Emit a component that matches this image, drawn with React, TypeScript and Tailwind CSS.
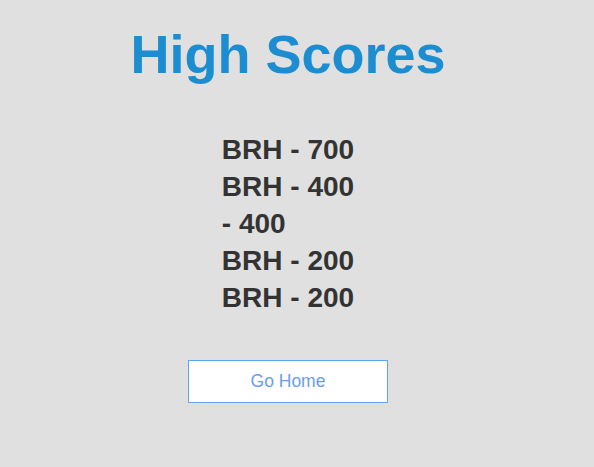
import React from "react";

const scores = [
  { name: "BRH", score: 700 },
  { name: "BRH", score: 400 },
  { name: "", score: 400 },
  { name: "BRH", score: 200 },
  { name: "BRH", score: 200 },
];

export default function App() {
  return (
    <div className="min-h-[467px] w-full bg-[#e0e0e0] font-['Liberation_Sans',Arial,sans-serif]">
      <div className="flex w-[576px] flex-col items-center">
        {/* Title */}
        <h1 className="mt-[23px] text-[54px] leading-[62px] font-bold text-[#1b8dd0]">High Scores</h1>

        {/* Score list */}
        <ul className="mt-[46px] flex flex-col text-[28px] leading-[37px] font-bold text-[#333333]">
          {scores.map((s, i) => (
            <li key={i}>
              {s.name ? `${s.name} - ${s.score}` : `- ${s.score}`}
            </li>
          ))}
        </ul>

        <button className="mt-[44px] h-[43px] w-[200px] border border-[#5aa6f0] bg-white text-[17.5px] text-[#6a9ee8]">
          Go Home
        </button>
      </div>
    </div>
  );
}
